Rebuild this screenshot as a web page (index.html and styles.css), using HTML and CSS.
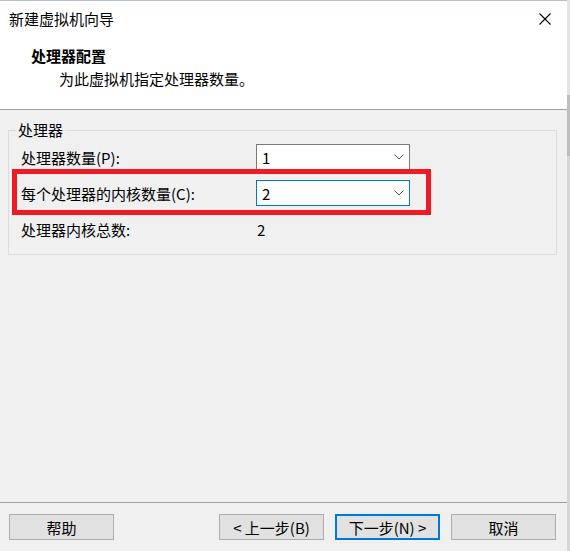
FILE: index.html
```html
<!DOCTYPE html>
<html lang="zh-CN">
<head>
  <meta charset="UTF-8" />
  <meta name="viewport" content="width=device-width, initial-scale=1.0"/>
  <title>新建虚拟机向导</title>
  <link rel="stylesheet" href="styles.css">
</head>
<body>

  <div class="window">
    <div class="dialog">

      <header class="top">
        <div class="titlebar">
          <span class="title">新建虚拟机向导</span>
          <svg class="close" width="12" height="12" viewBox="0 0 12 12">
            <path d="M0.5 0.5 L11.5 11.5 M11.5 0.5 L0.5 11.5" stroke="#000" stroke-width="1.1" fill="none"/>
          </svg>
        </div>
        <h1>处理器配置</h1>
        <p>为此虚拟机指定处理器数量。</p>
      </header>

      <main>
        <fieldset class="group">
          <legend>处理器</legend>

          <div class="row">
            <label>处理器数量(P):</label>
            <div class="combo">
              <span>1</span>
              <svg width="10" height="6" viewBox="0 0 10 6"><path d="M0.5 0.5 L5 5 L9.5 0.5" stroke="#555" fill="none"/></svg>
            </div>
          </div>

          <div class="row marked">
            <label>每个处理器的内核数量(C):</label>
            <div class="combo focus">
              <span>2</span>
              <svg width="10" height="6" viewBox="0 0 10 6"><path d="M0.5 0.5 L5 5 L9.5 0.5" stroke="#555" fill="none"/></svg>
            </div>
            <span class="mark"></span>
          </div>

          <div class="row">
            <label>处理器内核总数:</label>
            <span class="value">2</span>
          </div>
        </fieldset>
      </main>

      <footer>
        <button class="btn">帮助</button>
        <div class="nav">
          <button class="btn">&lt; 上一步(B)</button>
          <button class="btn default">下一步(N) &gt;</button>
          <button class="btn">取消</button>
        </div>
      </footer>

    </div>
    <div class="edge"></div>
  </div>

</body>
</html>
```

FILE: styles.css
```css
body {
  margin: 0;
  padding: 0;
  font-family: "Noto Sans CJK SC", "Noto Sans", sans-serif;
  font-size: 15px;
  color: #000;
  background: #f0f0f0;
}

.window {
  display: flex;
  width: 570px;
  height: 551px;
  overflow: hidden;
}

.dialog {
  width: 567px;
  display: flex;
  flex-direction: column;
  background: #f0f0f0;
}

.edge {
  width: 3px;
  background: linear-gradient(to bottom, #e4e4e4 0, #e4e4e4 95px, #bdbdbd 95px, #bdbdbd 156px, #d6d6d6 156px);
}

/* header */
.top {
  background: white;
  border-top: 1px solid #b3c0d3;
  border-bottom: 1px solid #a0a0a0;
  height: 108px;
}

.titlebar {
  display: flex;
  justify-content: space-between;
  align-items: center;
  height: 35px;
  padding: 0 16px 0 9px;
}

.title {
  line-height: 35px;
}

.top h1 {
  margin: 8px 0 0 31px;
  font-size: 15px;
  font-weight: bold;
  line-height: 23px;
}

.top p {
  margin: 0 0 0 59px;
  line-height: 23px;
}

/* group box */
main {
  flex: 1;
}

.group {
  margin: 10px 10px 0 8px;
  padding: 4px 0 12px 12px;
  border: 1px solid #dcdcdc;
}

.group legend {
  margin-left: -5px;
  padding: 0 2px;
  line-height: 20px;
}

.row {
  display: flex;
  align-items: center;
  height: 26px;
  margin-bottom: 10px;
  width: 389px;
  position: relative;
}

.row:last-child {
  margin-bottom: 0;
}

.row label {
  width: 235px;
}

.value {
  padding-left: 1px;
}

.combo {
  display: flex;
  justify-content: space-between;
  align-items: center;
  box-sizing: border-box;
  width: 154px;
  height: 26px;
  padding: 0 5px 0 5px;
  background: white;
  border: 1px solid #7a7a7a;
}

.combo.focus {
  border-color: #0078d7;
}

.mark {
  position: absolute;
  left: -9px;
  top: -11px;
  right: -21px;
  bottom: -9px;
  border: 5px solid #ed1c24;
}

/* buttons */
footer {
  border-top: 1px solid #a0a0a0;
  margin-bottom: 0;
  padding: 11px 11px 11px 9px;
  display: flex;
  justify-content: space-between;
}

.nav {
  display: flex;
  gap: 11px;
}

.btn {
  box-sizing: border-box;
  width: 105px;
  height: 26px;
  padding: 0;
  font-family: inherit;
  font-size: 15px;
  color: #000;
  background: #e1e1e1;
  border: 1px solid #adadad;
}

.btn.default {
  border: 2px solid #0078d7;
}
```
